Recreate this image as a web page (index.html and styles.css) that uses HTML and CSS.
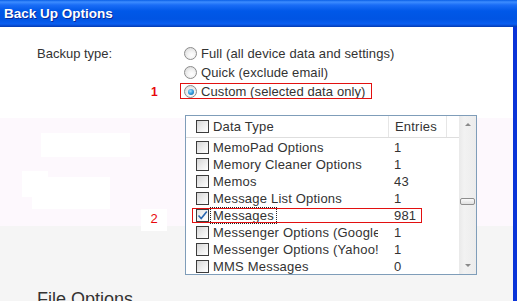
FILE: index.html
```html
<!DOCTYPE html>
<html>
<head>
<meta charset="utf-8">
<link rel="stylesheet" href="styles.css">
</head>
<body>
<div class="window">
  <div class="titlebar">Back Up Options</div>
  <div class="content">
    <div class="form">
      <div class="lbl">Backup type:</div>
      <div class="opt"><span class="radio"></span><span>Full (all device data and settings)</span></div>
      <div class="opt opt-row2"><span class="radio"></span><span>Quick (exclude email)</span></div>
      <div class="mark mark1">1</div>
      <div class="opt opt-row3"><span class="custom"><span class="radio on"></span><span>Custom (selected data only)</span></span></div>
    </div>

    <div class="list-row">
      <div class="listbox">
        <div class="list-main">
          <div class="head">
            <div class="c-name"><span class="cb"></span><span class="txt">Data Type</span></div>
            <div class="c-ent">Entries</div>
            <div class="c-pad"></div>
          </div>
          <div class="rows">
            <div class="row"><div class="c-name"><span class="cb"></span><span class="txt">MemoPad Options</span></div><div class="c-ent">1</div></div>
            <div class="row"><div class="c-name"><span class="cb"></span><span class="txt">Memory Cleaner Options</span></div><div class="c-ent">1</div></div>
            <div class="row"><div class="c-name"><span class="cb"></span><span class="txt">Memos</span></div><div class="c-ent">43</div></div>
            <div class="row"><div class="c-name"><span class="cb"></span><span class="txt">Message List Options</span></div><div class="c-ent">1</div></div>
            <div class="row sel"><div class="c-name"><span class="cb checked"><svg width="11" height="11" viewBox="0 0 11 11"><path d="M1.5 5.5 L4.2 8.6 L9.8 1.6" fill="none" stroke="#2a66b0" stroke-width="1.6"/></svg></span><span class="txt focus">Messages</span></div><div class="c-ent">981</div></div>
            <div class="row"><div class="c-name"><span class="cb"></span><span class="txt">Messenger Options (Google Talk)</span></div><div class="c-ent">1</div></div>
            <div class="row"><div class="c-name"><span class="cb"></span><span class="txt">Messenger Options (Yahoo! Messenger)</span></div><div class="c-ent">1</div></div>
            <div class="row"><div class="c-name"><span class="cb"></span><span class="txt">MMS Messages</span></div><div class="c-ent">0</div></div>
          </div>
        </div>
        <div class="scrollbar">
          <div class="sb-btn"><span class="tri-up"></span></div>
          <div class="sb-track"><div class="thumb"></div></div>
          <div class="sb-btn"><span class="tri-down"></span></div>
        </div>
      </div>
    </div>

    <h2 class="section">File Options</h2>

    <div class="patch p1"></div>
    <div class="patch p2a"></div>
    <div class="patch p2b"></div>
    <div class="patch p3"><span class="mark mark2">2</span></div>
  </div>
</div>
</body>
</html>
```

FILE: styles.css
```css
html, body {
  margin: 0;
  padding: 0;
  background: #fff;
}

.window {
  width: 517px;
  height: 301px;
  overflow: hidden;
  display: flex;
  flex-direction: column;
  font-family: "Liberation Sans", Arial, sans-serif;
}

.titlebar {
  flex: none;
  height: 27px;
  box-sizing: border-box;
  padding: 6px 0 0 4px;
  font-weight: bold;
  font-size: 13.5px;
  line-height: 16px;
  color: #fff;
  text-shadow: 1px 1px 0 #0b2a9a;
  background: linear-gradient(to bottom, #0a5fe6 0, #3d8dff 2px, #1a6df6 5px, #0058e8 11px, #0054e3 19px, #0a5ff0 24px, #0846c8 26px, #003cb0 27px);
}

.content {
  flex: 1 0 auto;
  position: relative;
  border-right: 4px solid #0a34d8;
  padding: 17px 0 0 37px;
  color: #333;
  font-size: 13px;
  background: linear-gradient(to bottom, #fff 0, #fff 91px, #fdf8fd 91px, #fdf8fd 199px, #f5f5f5 199px);
}

.form {
  display: grid;
  grid-template-columns: 146px auto;
  grid-auto-rows: 19px;
}

.lbl {
  grid-column: 1;
  grid-row: 1;
  line-height: 19px;
}

.opt {
  grid-column: 2;
  display: flex;
  align-items: center;
  line-height: 19px;
  letter-spacing: 0.1px;
}
.opt-row2 { grid-row: 2; }
.opt-row3 { grid-row: 3; }

.custom {
  position: relative;
  display: flex;
  align-items: center;
}
.custom::after {
  content: "";
  position: absolute;
  left: -3px;
  right: -6px;
  top: 1px;
  height: 16px;
  border: 1px solid #e21010;
  box-sizing: border-box;
}

.radio {
  width: 13px;
  height: 13px;
  box-sizing: border-box;
  border-radius: 50%;
  border: 1px solid #8c8c8c;
  background: radial-gradient(circle at 60% 65%, #ffffff 0, #f4f4f4 35%, #d4d4d4 100%);
  margin: 0 4px 0 1px;
  position: relative;
}
.radio.on::after {
  content: "";
  position: absolute;
  left: 2.5px;
  top: 2.5px;
  width: 6px;
  height: 6px;
  border-radius: 50%;
  background: radial-gradient(circle at 40% 35%, #a9e2ff 0, #39a0e0 45%, #0e5c9c 100%);
}

.mark {
  color: #e8080c;
  font-weight: bold;
  font-size: 12px;
}
.mark1 {
  grid-column: 1;
  grid-row: 3;
  padding-left: 114px;
  line-height: 19px;
  padding-top: 1px;
}

.list-row {
  display: flex;
  margin-top: 14px;
  padding-left: 148px;
}

.listbox {
  width: 292px;
  height: 160px;
  box-sizing: border-box;
  border: 1px solid #7f9db9;
  background: #fff;
  display: flex;
  letter-spacing: 0.2px;
}

.list-main {
  flex: 1;
  min-width: 0;
  overflow: hidden;
}

.head {
  display: flex;
  height: 22px;
  box-sizing: border-box;
  border-bottom: 1px solid #dedede;
}
.head .c-name,
.head .c-ent {
  border-right: 1px solid #e6e6e6;
  line-height: 21px;
}
.head .c-ent {
  padding-left: 6px;
}
.c-pad { flex: 1; }

.rows {
  padding-top: 1px;
}

.row {
  display: flex;
  height: 17px;
  line-height: 15px;
  position: relative;
}

.c-name {
  width: 203px;
  flex: none;
  box-sizing: border-box;
  padding: 0 10px;
  display: flex;
  align-items: center;
  overflow: hidden;
  white-space: nowrap;
}
.c-ent {
  width: 58px;
  flex: none;
  box-sizing: border-box;
  padding-left: 5px;
  display: flex;
  align-items: center;
}

.cb {
  flex: none;
  width: 13px;
  height: 13px;
  box-sizing: border-box;
  border: 1px solid #3c3c3c;
  background: linear-gradient(135deg, #d6d6d6 0, #eeeeee 55%, #ffffff 100%);
  display: flex;
  align-items: center;
  justify-content: center;
}
.cb.checked {
  background: linear-gradient(135deg, #e2e2e2 0, #f4f4f4 55%, #ffffff 100%);
}

.txt {
  margin-left: 1px;
  padding: 0 2px;
  border: 1px solid transparent;
  overflow: hidden;
  min-width: 0;
}
.txt.focus {
  border: 1px dotted #222;
}

.row.sel::after {
  content: "";
  position: absolute;
  left: 6px;
  top: 1px;
  width: 230px;
  height: 15px;
  box-sizing: border-box;
  border: 1px solid #e21010;
}

.scrollbar {
  width: 17px;
  flex: none;
  display: flex;
  flex-direction: column;
  background: linear-gradient(to right, #e9e9e9 0, #f2f2f2 30%, #ececec 100%);
}
.sb-btn {
  height: 17px;
  display: flex;
  align-items: center;
  justify-content: center;
}
.tri-up {
  width: 0;
  height: 0;
  border-left: 3px solid transparent;
  border-right: 3px solid transparent;
  border-bottom: 3px solid #8a8a8a;
}
.tri-down {
  width: 0;
  height: 0;
  border-left: 3px solid transparent;
  border-right: 3px solid transparent;
  border-top: 3px solid #8a8a8a;
}
.sb-track {
  flex: 1;
  padding-top: 65px;
}
.thumb {
  height: 7px;
  margin: 0 1px;
  box-sizing: border-box;
  border: 1px solid #8e8e8e;
  border-radius: 2px;
  background: linear-gradient(to bottom, #fafafa 0, #e0e0e0 100%);
}

.section {
  margin: 14px 0 0 0;
  font-weight: normal;
  font-size: 18px;
  line-height: 21px;
  color: #333;
}

.patch {
  position: absolute;
  background: #fff;
}
.p1 { left: 41px; top: 106px; width: 89px; height: 24px; }
.p2a { left: 22px; top: 144px; width: 26px; height: 26px; }
.p2b { left: 32px; top: 150px; width: 78px; height: 32px; }
.p3 {
  left: 141px;
  top: 182px;
  width: 26px;
  height: 22px;
  display: flex;
  justify-content: center;
  padding-top: 3px;
  box-sizing: border-box;
}
.mark2 {
  font-weight: normal;
  font-size: 13px;
  line-height: 13px;
}
```
